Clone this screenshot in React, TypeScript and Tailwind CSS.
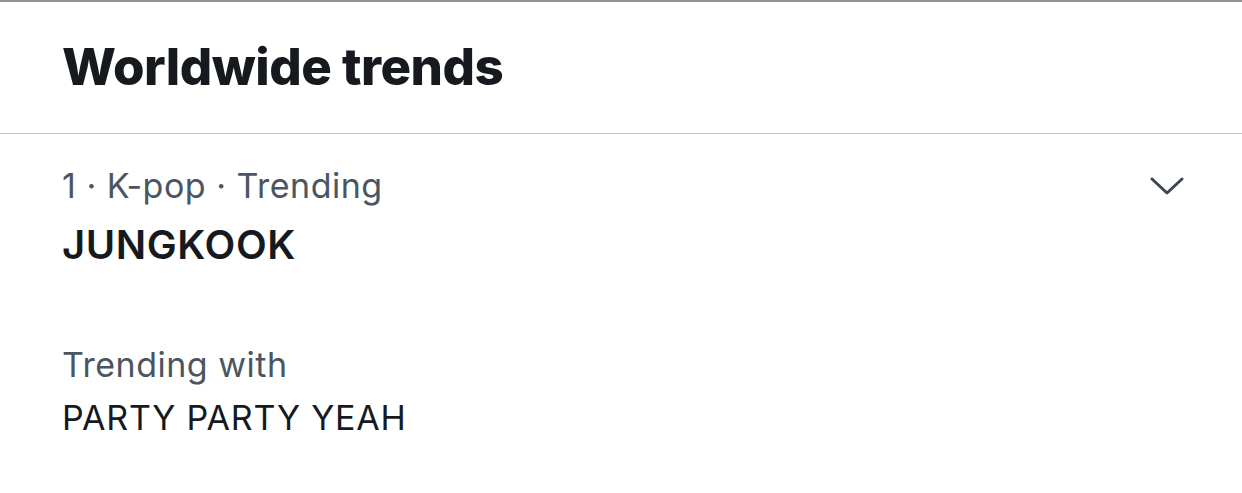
import React from "react";

const ChevronDown = () => (
  <svg
    className="w-[34px] h-[20px] text-[#3d4550]"
    viewBox="0 0 34 20"
    fill="none"
    stroke="currentColor"
    strokeWidth={3}
    strokeLinecap="round"
    strokeLinejoin="round"
  >
    <path d="M2 3l15 14L32 3" />
  </svg>
);

export default function App() {
  return (
    <div className="w-[1242px] h-[493px] bg-white font-['Inter',sans-serif] border-t-2 border-[#8f9296] overflow-hidden">
      <div className="h-[132px] flex items-center px-[62px] border-b border-[#c4c6c8]">
        <h2 className="text-[51px] font-extrabold tracking-[-0.5px] text-[#161a1f] leading-none pb-[2px]">
          Worldwide trends
        </h2>
      </div>

      <div className="pl-[62px] pr-[58px] pt-[32px]">
        <div className="flex justify-between items-start">
          <div>
            <div className="text-[34px] leading-[40px] tracking-[0.5px] text-[#4b5562]">
              1 · K-pop · Trending
            </div>
            <div className="text-[40px] leading-[44px] tracking-[0.6px] font-semibold text-[#161a1f] mt-[17px]">
              JUNGKOOK
            </div>
          </div>
          <div className="pt-[10px]">
            <ChevronDown />
          </div>
        </div>

        <div className="mt-[78px]">
          <div className="text-[34px] leading-[40px] tracking-[0.5px] text-[#4b5562]">
            Trending with
          </div>
          <div className="text-[34px] leading-[40px] tracking-[0.8px] text-[#161a1f] mt-[13px]">
            PARTY PARTY YEAH
          </div>
        </div>
      </div>
    </div>
  );
}
